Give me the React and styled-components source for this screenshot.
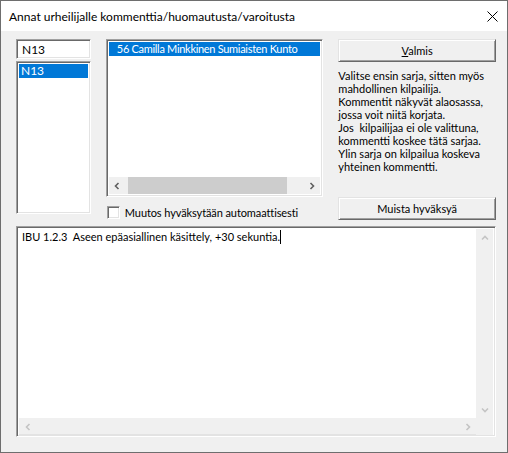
import React from "react";
import styled, { createGlobalStyle } from "styled-components";

const Global = createGlobalStyle`
  html, body {
    margin: 0;
    padding: 0;
    background: #f0f0f0;
  }
  body {
    font-family: Lato, "Noto Sans", sans-serif;
    color: #000;
  }
`;

const Window = styled.div`
  width: 508px;
  height: 453px;
  box-sizing: border-box;
  border: 1px solid #6e6e6e;
  background: #f0f0f0;
  display: flex;
  flex-direction: column;
`;

const TitleBar = styled.div`
  height: 30px;
  flex: none;
  background: #fff;
  display: flex;
  align-items: center;
  justify-content: space-between;
  padding: 0 9px 0 8px;
  font-size: 12px;
`;

const Body = styled.div`
  padding: 8px 11px 0 15px;
  display: flex;
  flex-direction: column;
`;

const TopRow = styled.div`
  display: flex;
  gap: 15px;
  height: 181px;
`;

const Column = styled.div`
  width: ${(p) => p.w}px;
  display: flex;
  flex-direction: column;
`;

const Sunken = styled.div`
  box-sizing: border-box;
  background: #fff;
  border: 1px solid;
  border-color: #a0a0a0 #fff #fff #a0a0a0;
  box-shadow: inset 1px 1px #696969, inset -1px -1px #e3e3e3;
`;

const Edit = styled(Sunken)`
  height: 20px;
  padding: 1px 0 0 5px;
  font-size: 12px;
  line-height: 17px;
`;

const ListBox = styled(Sunken)`
  height: ${(p) => p.h}px;
  margin-top: ${(p) => p.mt || 0}px;
  padding: 2px;
  display: flex;
  flex-direction: column;
  overflow: hidden;
`;

const Item = styled.div`
  height: 14px;
  line-height: 14px;
  padding-left: ${(p) => p.pl}px;
  font-size: ${(p) => p.fs || 12}px;
  letter-spacing: ${(p) => (p.fs ? "-0.3px" : "0")};
  white-space: nowrap;
  background: ${(p) => (p.selected ? "#0078d7" : "transparent")};
  color: ${(p) => (p.selected ? "#fff" : "#000")};
`;

const HScroll = styled.div`
  margin-top: auto;
  height: 17px;
  display: flex;
  align-items: center;
  background: #f0f0f0;
`;

const Arrow = styled.div`
  width: 17px;
  height: 17px;
  flex: none;
  display: flex;
  align-items: center;
  justify-content: center;
`;

const Thumb = styled.div`
  flex: 1;
  height: 17px;
  background: #cdcdcd;
  margin: 0 16px 0 2px;
`;

const CheckRow = styled.label`
  display: flex;
  align-items: center;
  gap: 5px;
  margin-top: 9px;
  font-size: 11px;
  letter-spacing: -0.1px;
`;

const CheckBox = styled(Sunken)`
  width: 13px;
  height: 13px;
  margin-left: 1px;
`;

const Button = styled.div`
  box-sizing: border-box;
  height: 23px;
  flex: none;
  display: flex;
  align-items: center;
  justify-content: center;
  font-size: 11px;
  background: #f0f0f0;
  border: 1px solid;
  border-color: #e3e3e3 #696969 #696969 #e3e3e3;
  box-shadow: inset 1px 1px #fff, inset -1px -1px #a0a0a0;
  margin-top: ${(p) => (p.bottom ? "auto" : "0")};
`;

const Help = styled.p`
  margin: 7px 0 0;
  font-size: 11px;
  line-height: 13px;
`;

const Memo = styled(Sunken)`
  margin-top: 6px;
  width: 480px;
  height: 211px;
  display: grid;
  grid-template-columns: 1fr 17px;
  grid-template-rows: 1fr 17px;
  padding: 2px 2px 1px 2px;
`;

const MemoText = styled.div`
  padding: 1px 0 0 3px;
  font-size: 11px;
  line-height: 14px;
`;

const Caret = styled.span`
  display: inline-block;
  width: 1px;
  height: 14px;
  background: #000;
  vertical-align: top;
`;

const VBar = styled.div`
  background: #f0f0f0;
  display: flex;
  flex-direction: column;
  justify-content: space-between;
`;

const HBar = styled.div`
  background: #f0f0f0;
  display: flex;
  justify-content: space-between;
  border-bottom: 1px solid #e3e3e3;
`;

const Corner = styled.div`
  background: #f0f0f0;
`;

const Chevron = ({ dir, color }) => {
  const d = {
    left: "M4.5 1 L1.5 4 L4.5 7",
    right: "M1.5 1 L4.5 4 L1.5 7",
    up: "M1 4.5 L4 1.5 L7 4.5",
    down: "M1 1.5 L4 4.5 L7 1.5",
  }[dir];
  const wide = dir === "up" || dir === "down";
  return (
    <svg width={wide ? 8 : 6} height={wide ? 6 : 8} viewBox={wide ? "0 0 8 6" : "0 0 6 8"}>
      <path d={d} fill="none" stroke={color} strokeWidth="1.6" />
    </svg>
  );
};

const CloseIcon = () => (
  <svg width="11" height="11" viewBox="0 0 11 11">
    <path d="M0.5 0.5 L10.5 10.5 M10.5 0.5 L0.5 10.5" stroke="#000" strokeWidth="1" />
  </svg>
);

export default function App() {
  return (
    <>
      <Global />
      <Window>
        <TitleBar>
          <span>Annat urheilijalle kommenttia/huomautusta/varoitusta</span>
          <CloseIcon />
        </TitleBar>
        <Body>
          <TopRow>
            <Column w={75}>
              <Edit>N13</Edit>
              <ListBox h={153} mt={2}>
                <Item selected pl={2}>N13</Item>
              </ListBox>
            </Column>
            <Column w={218}>
              <ListBox h={158}>
                <Item selected pl={8} fs={11}>56 Camilla Minkkinen Sumiaisten Kunto</Item>
                <HScroll>
                  <Arrow><Chevron dir="left" color="#606060" /></Arrow>
                  <Thumb />
                  <Arrow><Chevron dir="right" color="#606060" /></Arrow>
                </HScroll>
              </ListBox>
              <CheckRow>
                <CheckBox />
                Muutos hyväksytään automaattisesti
              </CheckRow>
            </Column>
            <Column w={158}>
              <Button>
                <span><u>V</u>almis</span>
              </Button>
              <Help>
                Valitse ensin sarja, sitten myös
                <br />mahdollinen kilpailija.
                <br />Kommentit näkyvät alaosassa,
                <br />jossa voit niitä korjata.
                <br />Jos&nbsp; kilpailijaa ei ole valittuna,
                <br />kommentti koskee tätä sarjaa.
                <br />Ylin sarja on kilpailua koskeva
                <br />yhteinen kommentti.
              </Help>
              <Button bottom>Muista hyväksyä</Button>
            </Column>
          </TopRow>
          <Memo>
            <MemoText>
              IBU 1.2.3&nbsp; Aseen epäasiallinen käsittely, +30 sekuntia.<Caret />
            </MemoText>
            <VBar>
              <Arrow><Chevron dir="up" color="#c4c4c4" /></Arrow>
              <Arrow><Chevron dir="down" color="#c4c4c4" /></Arrow>
            </VBar>
            <HBar>
              <Arrow><Chevron dir="left" color="#c4c4c4" /></Arrow>
              <Arrow><Chevron dir="right" color="#c4c4c4" /></Arrow>
            </HBar>
            <Corner />
          </Memo>
        </Body>
      </Window>
    </>
  );
}
